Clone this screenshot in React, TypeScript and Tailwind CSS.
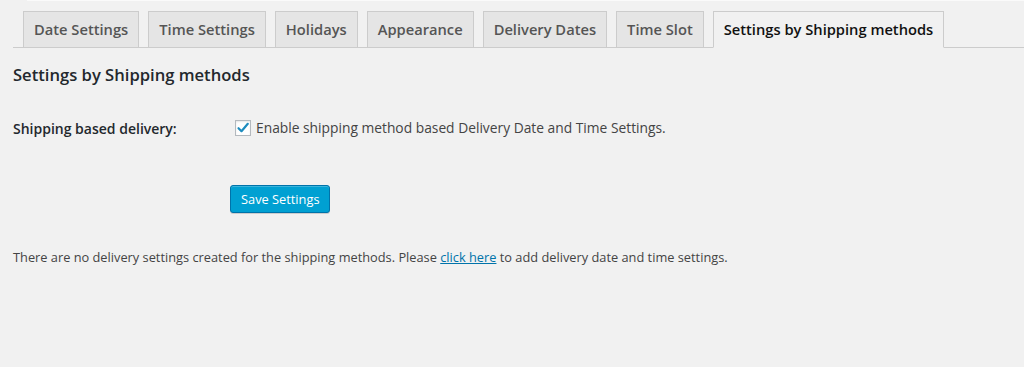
import React from "react";

const TABS = [
  "Date Settings",
  "Time Settings",
  "Holidays",
  "Appearance",
  "Delivery Dates",
  "Time Slot",
  "Settings by Shipping methods",
];

const ACTIVE = "Settings by Shipping methods";

export default function App() {
  return (
    <div
      className="w-[1024px] h-[367px] bg-[#f1f1f1] overflow-hidden"
      style={{ fontFamily: '"Open Sans", "Liberation Sans", sans-serif' }}
    >
      <div className="h-px bg-[#fafafa] ml-[27px]" />

      {/* TABS */}
      <div className="mt-[10px] ml-[13px] border-b border-[#cccccc] pl-[10px] flex gap-[9px] items-end h-[37px]">
        {TABS.map((t) => (
          <div
            key={t}
            className={`h-[37px] px-[10px] border border-[#cccccc] text-[14.7px] font-semibold leading-[34px] -mb-px ${
              t === ACTIVE
                ? "bg-[#f1f1f1] text-[#111111] border-b-[#f1f1f1]"
                : "bg-[#e5e5e5] text-[#555555]"
            }`}
          >
            {t}
          </div>
        ))}
      </div>

      {/* HEADING */}
      <div className="pl-[13px] pt-[15px] text-[16.6px] font-semibold text-[#23282d] leading-[24px]">
        Settings by Shipping methods
      </div>

      {/* ROW */}
      <div className="flex items-center pl-[13px] mt-[29px] h-[24px]">
        <div className="w-[222px] text-[14px] font-semibold text-[#23282d]">
          Shipping based delivery:
        </div>
        <div className="flex items-center gap-[5px]">
          <span className="w-[16px] h-[16px] bg-white border border-[#b4b9be] shadow-[inset_0_1px_2px_rgba(0,0,0,0.1)] flex items-center justify-center">
            <svg width="14" height="14" viewBox="0 0 14 14">
              <path
                d="M2.5 7.2 L5.5 10.2 L11.8 2.8"
                fill="none"
                stroke="#1e8cbe"
                strokeWidth="2.2"
                strokeLinecap="round"
                strokeLinejoin="round"
              />
            </svg>
          </span>
          <span className="text-[13.8px] text-[#444444]">
            Enable shipping method based Delivery Date and Time Settings.
          </span>
        </div>
      </div>

      {/* SAVE */}
      <div className="pl-[230px] mt-[45px]">
        <button className="h-[28px] px-[10px] rounded-[3px] bg-[#00a0d2] border border-[#0073aa] shadow-[inset_0_1px_0_rgba(120,200,230,0.5),0_1px_0_rgba(0,0,0,0.15)] text-white text-[12.8px] leading-[26px]">
          Save Settings
        </button>
      </div>

      {/* NOTICE */}
      <div className="pl-[13px] mt-[34px] text-[12.8px] text-[#444444] leading-[20px]">
        There are no delivery settings created for the shipping methods. Please{" "}
        <a className="text-[#0073aa] underline" href="#">
          click here
        </a>{" "}
        to add delivery date and time settings.
      </div>
    </div>
  );
}
